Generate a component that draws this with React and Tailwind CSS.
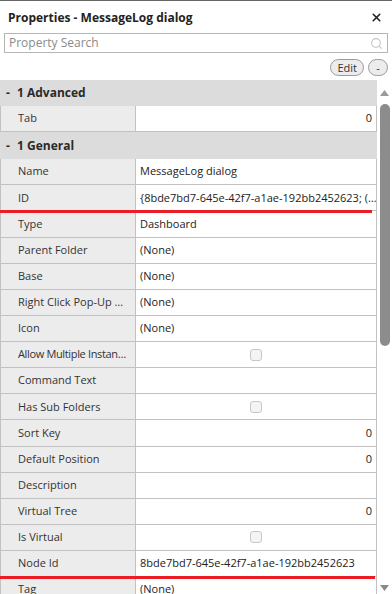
import { Search, X } from 'lucide-react';

const ADVANCED = [{ label: 'Tab', value: '0', kind: 'num' }];

const GENERAL = [
  { label: 'Name', value: 'MessageLog dialog' },
  { label: 'ID', value: '{8bde7bd7-645e-42f7-a1ae-192bb2452623; (…', mark: true },
  { label: 'Type', value: 'Dashboard' },
  { label: 'Parent Folder', value: '(None)' },
  { label: 'Base', value: '(None)' },
  { label: 'Right Click Pop-Up …', value: '(None)' },
  { label: 'Icon', value: '(None)' },
  { label: 'Allow Multiple Instan…', kind: 'check', tight: true },
  { label: 'Command Text', value: '' },
  { label: 'Has Sub Folders', kind: 'check' },
  { label: 'Sort Key', value: '0', kind: 'num' },
  { label: 'Default Position', value: '0', kind: 'num' },
  { label: 'Description', value: '' },
  { label: 'Virtual Tree', value: '0', kind: 'num' },
  { label: 'Is Virtual', kind: 'check' },
  { label: 'Node Id', value: '8bde7bd7-645e-42f7-a1ae-192bb2452623', mark: true, long: true },
  { label: 'Tag', value: '(None)' },
];

export default function App() {
  return (
    <div
      className="w-[392px] h-[594px] overflow-hidden bg-white border-t border-[#666] text-[#333] flex flex-col"
      style={{ fontFamily: '"Open Sans", "DejaVu Sans", sans-serif' }}
    >
      <div className="h-[32px] shrink-0 flex items-center justify-between pl-2 pr-[9px] pt-[1px]">
        <span className="text-[12px] font-bold text-[#222]">Properties - MessageLog dialog</span>
        <X size={13} strokeWidth={3} className="text-[#222]" />
      </div>
      <div className="mx-1 h-[20px] shrink-0 border border-[#b5b5b5] flex items-center justify-between px-[4px]">
        <span className="text-[12px] text-[#8a8a8a]">Property Search</span>
        <Search size={13} className="text-[#c4c4c4]" />
      </div>
      <div className="h-[27px] shrink-0 flex items-center justify-end gap-[4px] pr-[4px] pt-[2px]">
        <button className="h-[17px] px-[6px] rounded-full border border-[#9a9a9a] bg-[#ececec] text-[11px] leading-none text-[#333]">
          Edit
        </button>
        <button className="h-[17px] w-[20px] rounded-full border border-[#9a9a9a] bg-[#ececec] text-[11px] leading-none text-[#333]">
          -
        </button>
      </div>
      <div className="flex flex-1 min-h-0">
        <div className="w-[377px] flex flex-col">
          <Section title="1 Advanced" rows={ADVANCED} tall={false} />
          <Section title="1 General" rows={GENERAL} tall />
        </div>
        <Scrollbar />
      </div>
    </div>
  );
}

function Section({ title, rows, tall }) {
  return (
    <>
      <div
        className={`${tall ? 'h-[27px]' : 'h-[26px]'} shrink-0 bg-[#dcdcdc] flex items-center text-[12px] font-bold text-[#2a2a2a]`}
      >
        <span className="w-[17px] pl-[6px]">-</span>
        <span>{title}</span>
      </div>
      {rows.map((r) => (
        <Row key={r.label} row={r} />
      ))}
    </>
  );
}

function Row({ row }) {
  return (
    <div className="h-[26.13px] shrink-0 flex border-b border-[#c2c2c2] border-r relative text-[11px]">
      <div className="w-[136px] shrink-0 bg-[#ececec] border-r border-l border-[#c2c2c2] pl-[17px] flex items-center overflow-hidden">
        <span className={`whitespace-nowrap ${row.tight ? 'tracking-[-0.35px]' : ''}`}>{row.label}</span>
      </div>
      <div
        className={`flex-1 flex items-center px-[4px] whitespace-nowrap overflow-hidden text-[#222] ${
          row.kind === 'num' ? 'justify-end' : row.kind === 'check' ? 'justify-center' : ''
        }`}
      >
        {row.kind === 'check' ? (
          <span className="w-[12px] h-[12px] rounded-[3px] border border-[#c8c8c8] bg-[#f4f4f4]" />
        ) : (
          row.value
        )}
      </div>
      {row.mark && (
        <div
          className={`absolute z-10 left-0 bottom-[-3px] h-[3px] bg-[#ec1c24] ${row.long ? 'w-[375px]' : 'w-[372px]'}`}
        />
      )}
    </div>
  );
}

function Scrollbar() {
  return (
    <div className="w-[15px] flex flex-col items-center">
      <svg width="9" height="6" viewBox="0 0 9 6" className="mt-[10px]">
        <path d="M4.5 0 L9 6 L0 6 Z" fill="#9a9a9a" />
      </svg>
      <div className="mt-[8px] w-[10px] h-[242px] rounded-full bg-[#8c8c8c]" />
      <div className="flex-1" />
      <svg width="9" height="6" viewBox="0 0 9 6" className="mb-[3px]">
        <path d="M0 0 L9 0 L4.5 6 Z" fill="#8a8a8a" />
      </svg>
    </div>
  );
}
